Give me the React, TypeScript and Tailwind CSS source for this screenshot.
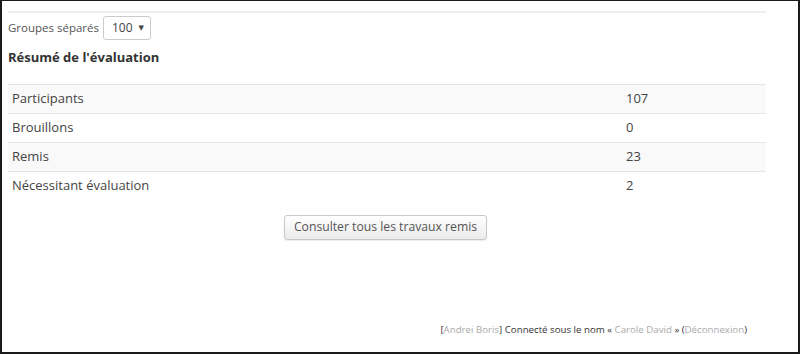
const rows = [
  { label: 'Participants', value: '107' },
  { label: 'Brouillons', value: '0' },
  { label: 'Remis', value: '23' },
  { label: 'Nécessitant évaluation', value: '2' },
];

export default function App() {
  return (
    <div
      className="w-[800px] h-[354px] bg-white border-l-2 border-r-2 border-t border-b-2 border-[#1a1a1a] flex flex-col text-[#444]"
      style={{ fontFamily: '"Open Sans", "DejaVu Sans", sans-serif' }}
    >
      <div className="pl-[6px] pr-[32px] pt-[10px]">
        {/* top rule */}
        <div className="h-[2px] bg-[#eeeeee]" />

        {/* group selector */}
        <div className="flex items-center gap-[4px] mt-[3px] h-[24px]">
          <span className="text-[11.5px] text-[#555]">Groupes séparés</span>
          <div className="w-[48px] h-[24px] border border-[#ccc] rounded-[3px] flex items-center justify-between pl-[8px] pr-[6px]">
            <span className="text-[12px] text-[#444]">100</span>
            <span className="text-[7px] text-[#444]">▼</span>
          </div>
        </div>

        {/* summary heading */}
        <h3 className="mt-[8px] text-[13px] font-bold text-[#333]">Résumé de l'évaluation</h3>

        {/* summary table */}
        <div className="mt-[16px] border-t border-[#e5e5e5]">
          {rows.map((r, i) => (
            <div
              key={r.label}
              className={`flex items-center h-[29px] text-[13px] ${i < rows.length - 1 ? 'border-b border-[#e5e5e5]' : ''} ${i % 2 === 0 ? 'bg-[#f9f9f9]' : 'bg-white'}`}
            >
              <div className="w-[618px] pl-[4px]">{r.label}</div>
              <div className="flex-1">{r.value}</div>
            </div>
          ))}
        </div>

        {/* submissions button */}
        <div className="flex justify-center mt-[14px] pr-[3px]">
          <button className="h-[25px] px-[9px] text-[12.2px] text-[#555] border border-[#c8c8c8] rounded-[3px] bg-gradient-to-b from-white to-[#ebebeb] shadow-[0_1px_1px_rgba(0,0,0,0.08)]">
            Consulter tous les travaux remis
          </button>
        </div>
      </div>

      {/* footer login info */}
      <div className="mt-auto mb-[14px] pr-[51px] flex justify-end text-[9.7px] text-[#333]">
        <span>
          [<span className="text-[#aaa]">Andrei Boris</span>] Connecté sous le nom «{' '}
          <span className="text-[#aaa]">Carole David</span> » (<span className="text-[#aaa]">Déconnexion</span>)
        </span>
      </div>
    </div>
  );
}
